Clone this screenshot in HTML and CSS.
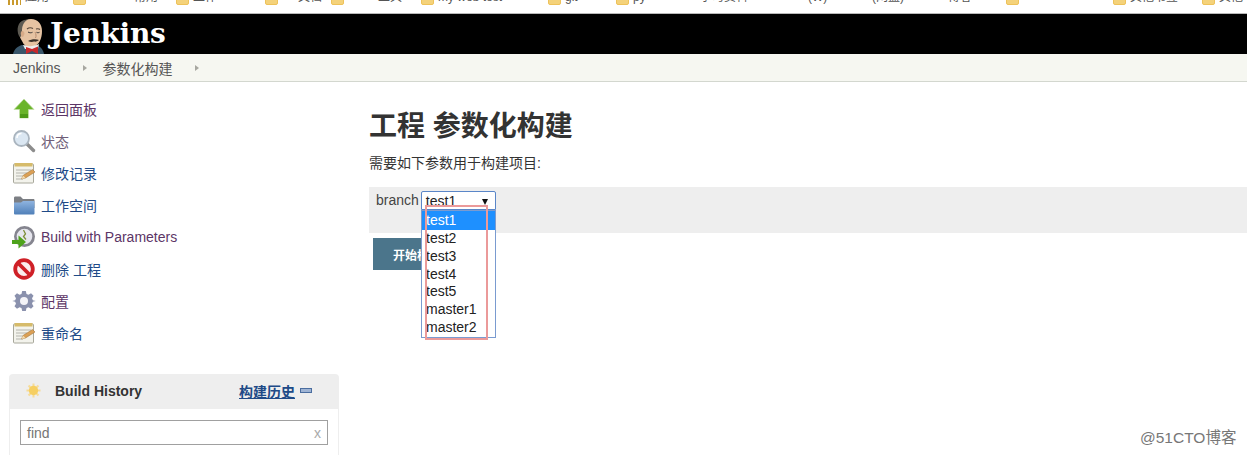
FILE: index.html
```html
<!DOCTYPE html>
<html lang="zh">
<head>
<meta charset="utf-8">
<title>Jenkins</title>
<link rel="stylesheet" href="styles.css">
</head>
<body>
<svg class="defs" width="0" height="0" aria-hidden="true">
  <defs>
    <symbol id="note" viewBox="0 0 24 24">
      <rect x="1.500" y="3" width="20" height="19" rx="1" fill="#f3f3ec" stroke="#a8a89c"/>
      <rect x="2.500" y="2" width="18" height="3.500" fill="#d6bb6a"/>
      <path d="M4 9h15M4 12h11M4 15h8M4 18h7" stroke="#b5b5ae" stroke-width="1"/>
      <path d="M9.500 18l1.500-3.500L20.500 8.500l2.500 2.500-9.500 6z" fill="#dba055" stroke="#9a6a30" stroke-width=".5"/>
      <path d="M9.500 18l1.500-3.500 2.500 2.500z" fill="#f2dcb0"/>
    </symbol>
    <linearGradient id="blue" x1="0" y1="0" x2="0" y2="1">
      <stop offset="0" stop-color="#8fb4e0"/>
      <stop offset="1" stop-color="#4f7fb8"/>
    </linearGradient>
  </defs>
</svg>
<div class="bookmarks">
  <span class="bm bm-apps"><i class="apps"></i><b>应用</b></span>
  <span class="bm bm-a"><i class="folder"></i><b>常用</b></span>
  <span class="bm bm-b"><i class="folder"></i><b>工作</b></span>
  <span class="bm bm-c"><i class="folder"></i><b>文档</b></span>
  <span class="bm bm-d"><i class="folder"></i><b>工具</b></span>
  <span class="bm bm-e"><i class="folder"></i><b>my web test</b></span>
  <span class="bm bm-f"><i class="folder"></i><b>git</b></span>
  <span class="bm bm-g"><i class="folder"></i><b>py</b></span>
  <span class="bm bm-h"><b>学习资料</b></span>
  <span class="bm bm-i"><b>(W)</b></span>
  <span class="bm bm-j"><b>(网盘)</b></span>
  <span class="bm bm-k"><b>博客</b></span>
  <span class="bm bm-l"><i class="folder"></i></span>
  <span class="bm bm-m"><i class="folder"></i><b>其他书签</b></span>
  <span class="bm bm-n"><i class="folder"></i><b>其他</b></span>
</div>
<header class="topbar">
  <svg class="butler" viewBox="0 0 33 36" width="33" height="36" aria-hidden="true">
    <path d="M0 36c1-5 5-8 9-9h14c4 1 7 4 8 9z" fill="#39566a"/>
    <path d="M6 14C6 6 11 1 18 1s11 5 11 12c0 8-3 14-9 16-5 1-9-1-11-6-2-3-3-6-3-9z" fill="#e6c3a2"/>
    <path d="M6 18C3 11 5 4 11 2c2-.7 3-.7 4-.5C10 4 9 9 9 13l-1 6z" fill="#5d5a52"/>
    <path d="M10 19c-2.500-.5-3-5-1-6 1.500-.5 2.500 1 2.500 3z" fill="#d7ab88"/>
    <path d="M14 11c2-1.500 4-1.500 6-.5M23 11c1.500-.5 3-.3 4 .5" stroke="#55463a" stroke-width="1.100" fill="none"/>
    <path d="M15 14c1.500 1 3 1 4.500.3M23.500 14.300c1 .6 2 .5 3 0" stroke="#333" stroke-width="1" fill="none"/>
    <path d="M22 14c1 2 1.500 4 .5 6" stroke="#b98d70" fill="none"/>
    <path d="M15 23c3-2 8-2.500 11-1-2 1.500-3 2-5 1.600-2 .8-4 .4-6-.6z" fill="#3a3028"/>
    <path d="M10 27c3 1 6 1.500 9 1s5-1 7-2l-1 5H12z" fill="#efefef"/>
    <path d="M13 29l6 2 6-2.500V36l-6-3-6 3z" fill="#c8292c"/>
  </svg>
  <span class="brand">Jenkins</span>
</header>
<nav class="crumbs">
  <a class="crumb">Jenkins</a><i class="sep"></i>
  <a class="crumb">参数化构建</a><i class="sep"></i>
</nav>
<div class="layout">
  <aside class="side">
    <ul class="tasks">
      <li class="task">
        <svg class="ico" viewBox="0 0 24 24"><path d="M12 2L22 12.500h-5.500V21h-9v-8.500H2z" fill="#6ab42a" stroke="#c4e0a8" stroke-width=".8"/><path d="M8 17h8v4H8z" fill="#4e9a18"/></svg>
        <a class="visited">返回面板</a>
      </li>
      <li class="task">
        <svg class="ico" viewBox="0 0 24 24"><path d="M14 14l7.500 7.500" stroke="#8c8c8c" stroke-width="3.400" stroke-linecap="round"/><circle cx="9.500" cy="9.500" r="7.500" fill="#dbe7f2" stroke="#a9b4be" stroke-width="1.800"/><path d="M5 9c0-3 2-4.500 4.500-4.500" stroke="#fff" stroke-width="1.500" fill="none"/></svg>
        <a class="visited soft">状态</a>
      </li>
      <li class="task">
        <svg class="ico" viewBox="0 0 24 24"><use href="#note"/></svg>
        <a>修改记录</a>
      </li>
      <li class="task">
        <svg class="ico" viewBox="0 0 24 24"><path d="M2 5c0-1 .5-1.500 1.500-1.500h5L11 6h10.500c.5 0 1 .5 1 1v8H2z" fill="#7c7f84"/><path d="M2 9.500h7l2-1.500h11.500v12.500a1 1 0 0 1-1 1H3a1 1 0 0 1-1-1z" fill="url(#blue)"/></svg>
        <a>工作空间</a>
      </li>
      <li class="task">
        <svg class="ico" viewBox="0 0 24 24"><circle cx="12.500" cy="11.500" r="10.500" fill="#85858f"/><circle cx="12.500" cy="11.500" r="7.800" fill="#e6e6ee"/><path d="M11.500 5l2 4-2 2.500 2.500 3" stroke="#7f8f3a" stroke-width="1.300" fill="none"/><path d="M0 15h6.500v-4.500L14 17l-7.500 6.500V19H0z" fill="#4ea31c"/></svg>
        <a class="visited">Build with Parameters</a>
      </li>
      <li class="task">
        <svg class="ico" viewBox="0 0 24 24"><circle cx="12" cy="12" r="8.800" fill="#fbeeee" stroke="#cf2027" stroke-width="3.800"/><path d="M6 6l12 12" stroke="#cf2027" stroke-width="3.800"/></svg>
        <a>删除 工程</a>
      </li>
      <li class="task">
        <svg class="ico" viewBox="0 0 24 24"><path d="M10 1h4l.8 3.200 2.200.9 2.800-1.700 2.800 2.800-1.700 2.800.9 2.200L25 12l-3.200.8-.9 2.200 1.700 2.800-2.800 2.800-2.800-1.700-2.200.9L14 23h-4l-.8-3.200-2.200-.9-2.800 1.700-2.800-2.800 1.700-2.800-.9-2.200L-1 12l3.200-.8.900-2.200-1.700-2.800 2.800-2.800L7 5.100l2.200-.9z" fill="#8a91ad" transform="translate(1.200 1.200) scale(.9)"/><circle cx="12" cy="12" r="4" fill="#f4f4f8"/></svg>
        <a class="visited">配置</a>
      </li>
      <li class="task">
        <svg class="ico" viewBox="0 0 24 24"><use href="#note"/></svg>
        <a>重命名</a>
      </li>
    </ul>
    <section class="history">
      <div class="history-head">
        <svg class="sun" viewBox="0 0 16 16"><g stroke="#f6dc9a" stroke-width="2.200"><path d="M8 .5v15M.5 8h15M2.700 2.700l10.600 10.600M13.300 2.700L2.700 13.300"/></g><circle cx="8" cy="8" r="5" fill="#f6cf62"/></svg>
        <span class="history-title">Build History</span>
        <a class="trend">构建历史</a>
        <i class="collapse"></i>
      </div>
      <div class="history-body">
        <div class="find"><span>find</span><span class="clear">x</span></div>
      </div>
    </section>
  </aside>
  <main class="main">
    <h1 class="title">工程 参数化构建</h1>
    <p class="desc">需要如下参数用于构建项目:</p>
    <div class="param">
      <label class="param-name">branch</label>
      <div class="select">test1<i class="caret"></i></div>
    </div>
    <button class="build">开始构建</button>
    <ul class="dropdown">
      <li class="opt opt-on">test1</li>
      <li class="opt">test2</li>
      <li class="opt">test3</li>
      <li class="opt">test4</li>
      <li class="opt">test5</li>
      <li class="opt">master1</li>
      <li class="opt">master2</li>
    </ul>
    <div class="redbox"></div>
  </main>
</div>
<div class="watermark">@51CTO博客</div>
</body>
</html>
```
FILE: styles.css
```css
* { box-sizing: border-box; }
html, body { margin: 0; padding: 0; height: 455px; overflow: hidden; background: #fff; }
body { font: 14px "Liberation Sans", "Noto Sans CJK SC", sans-serif; color: #333; position: relative; }
.defs { position: absolute; }
ul { list-style: none; margin: 0; padding: 0; }

.bookmarks { height: 14px; overflow: hidden; border-bottom: 1px solid #b9b9b9; position: relative; }
.bm { position: absolute; top: -10px; display: flex; gap: 4px; align-items: center; font-size: 12px; line-height: 15px; color: #555; white-space: nowrap; }
.bm b { font-weight: normal; }
.folder { display: block; width: 13px; height: 15px; background: #f4d27a; border: 1px solid #eec25a; border-radius: 2px; }
.apps { display: block; width: 13px; height: 15px; background: repeating-linear-gradient(90deg, #c99a2e 0 2px, #fff 2px 4px); }
.bm-apps { left: 8px; } .bm-a { left: 73px; } .bm-a b { margin-left: 44px; }
.bm-b { left: 176px; } .bm-c { left: 265px; } .bm-c b { margin-left: 16px; }
.bm-d { left: 331px; } .bm-d b { margin-left: 30px; }
.bm-e { left: 421px; } .bm-f { left: 548px; } .bm-g { left: 616px; }
.bm-h { left: 700px; } .bm-i { left: 808px; } .bm-j { left: 872px; } .bm-k { left: 948px; }
.bm-l { left: 1006px; } .bm-m { left: 1113px; } .bm-n { left: 1202px; }

.topbar { height: 40px; background: #000; display: flex; align-items: flex-end; padding-left: 13px; }
.butler { display: block; flex: none; }
.brand { font: bold 28px/40px "DejaVu Serif", "Liberation Serif", serif; color: #fff; margin-left: 4px; align-self: center; letter-spacing: -.3px; }

.crumbs { height: 28px; background: #f6f7f1; border-bottom: 1px solid #d3d7cf; display: flex; align-items: center; padding-left: 13px; color: #555; }
.crumb { color: #555; }
.sep { width: 0; height: 0; border-left: 4px solid #a7a7a0; border-top: 3.500px solid transparent; border-bottom: 3.500px solid transparent; margin: 0 15px 0 23px; }

.layout { display: flex; align-items: flex-start; }
.side { width: 339px; padding: 11px 0 0 9px; flex: none; }
.tasks { margin-bottom: 25px; }
.task { height: 32px; display: flex; align-items: center; gap: 5px; padding-left: 3px; }
.ico { width: 24px; height: 24px; flex: none; display: block; }
.task a { color: #204a87; }
.task a.visited { color: #5c3566; }
.task a.soft { color: #6f5e78; }

.history { width: 330px; }
.history-head { height: 35px; background: #eee; border-radius: 4px 4px 0 0; display: flex; align-items: center; padding: 0 27px 2px 17px; }
.sun { width: 15px; height: 15px; flex: none; }
.history-title { font-weight: bold; color: #333; margin-left: 14px; }
.trend { margin-left: auto; font-weight: bold; color: #204a87; text-decoration: underline; }
.collapse { width: 12px; height: 5px; margin-left: 5px; background: #9fb4d4; border: 1px solid #4a6d9f; }
.history-body { border: 1px solid #eee; border-top: 0; padding: 11px 10px 20px; height: 60px; }
.find { height: 25px; border: 1px solid #a0a0a0; padding: 0 6px; display: flex; align-items: center; justify-content: space-between; color: #757575; }
.clear { color: #aaa; }

.main { flex: 1; padding: 17px 0 0 30px; position: relative; min-width: 0; }
.title { font-size: 28px; line-height: 32px; font-weight: bold; color: #333; margin: 12px 0 0; }
.desc { margin: 10px 0 0; line-height: 20px; color: #333; }
.param { height: 46px; margin-top: 14px; background: #eee; display: flex; align-items: flex-start; padding: 4px 0 0 7px; }
.param-name { line-height: 18px; margin-right: 2px; color: #444; }
.select { width: 75px; height: 19px; background: #fff; border: 1px solid #5a86c8; border-radius: 2px 2px 0 0; line-height: 19px; padding-left: 4px; color: #222; position: relative; }
.caret { position: absolute; right: 7px; top: 7px; width: 0; height: 0; border-top: 6px solid #111; border-left: 3px solid transparent; border-right: 3px solid transparent; }
.build { display: block; margin: 5px 0 0 4px; width: 70px; height: 32px; border: 0; background: #4b758b; color: #fff; font: bold 12px "Liberation Sans", "Noto Sans CJK SC", sans-serif; text-align: left; padding: 0 0 0 20px; }
.dropdown { position: absolute; left: 82px; top: 128px; width: 75px; height: 128px; background: #fff; border: 1px solid #7a9bd0; color: #222; }
.opt { height: 17.800px; line-height: 17.800px; padding-left: 4px; }
.opt-on { height: 19px; line-height: 18px; background: #1e90ff; color: #fff; }
.redbox { position: absolute; left: 86px; top: 123px; width: 63px; height: 135px; border: 2px solid #eb9a9a; pointer-events: none; }

.watermark { position: absolute; left: 1140px; top: 429px; font-size: 15.500px; line-height: 18px; color: #777; }
```
